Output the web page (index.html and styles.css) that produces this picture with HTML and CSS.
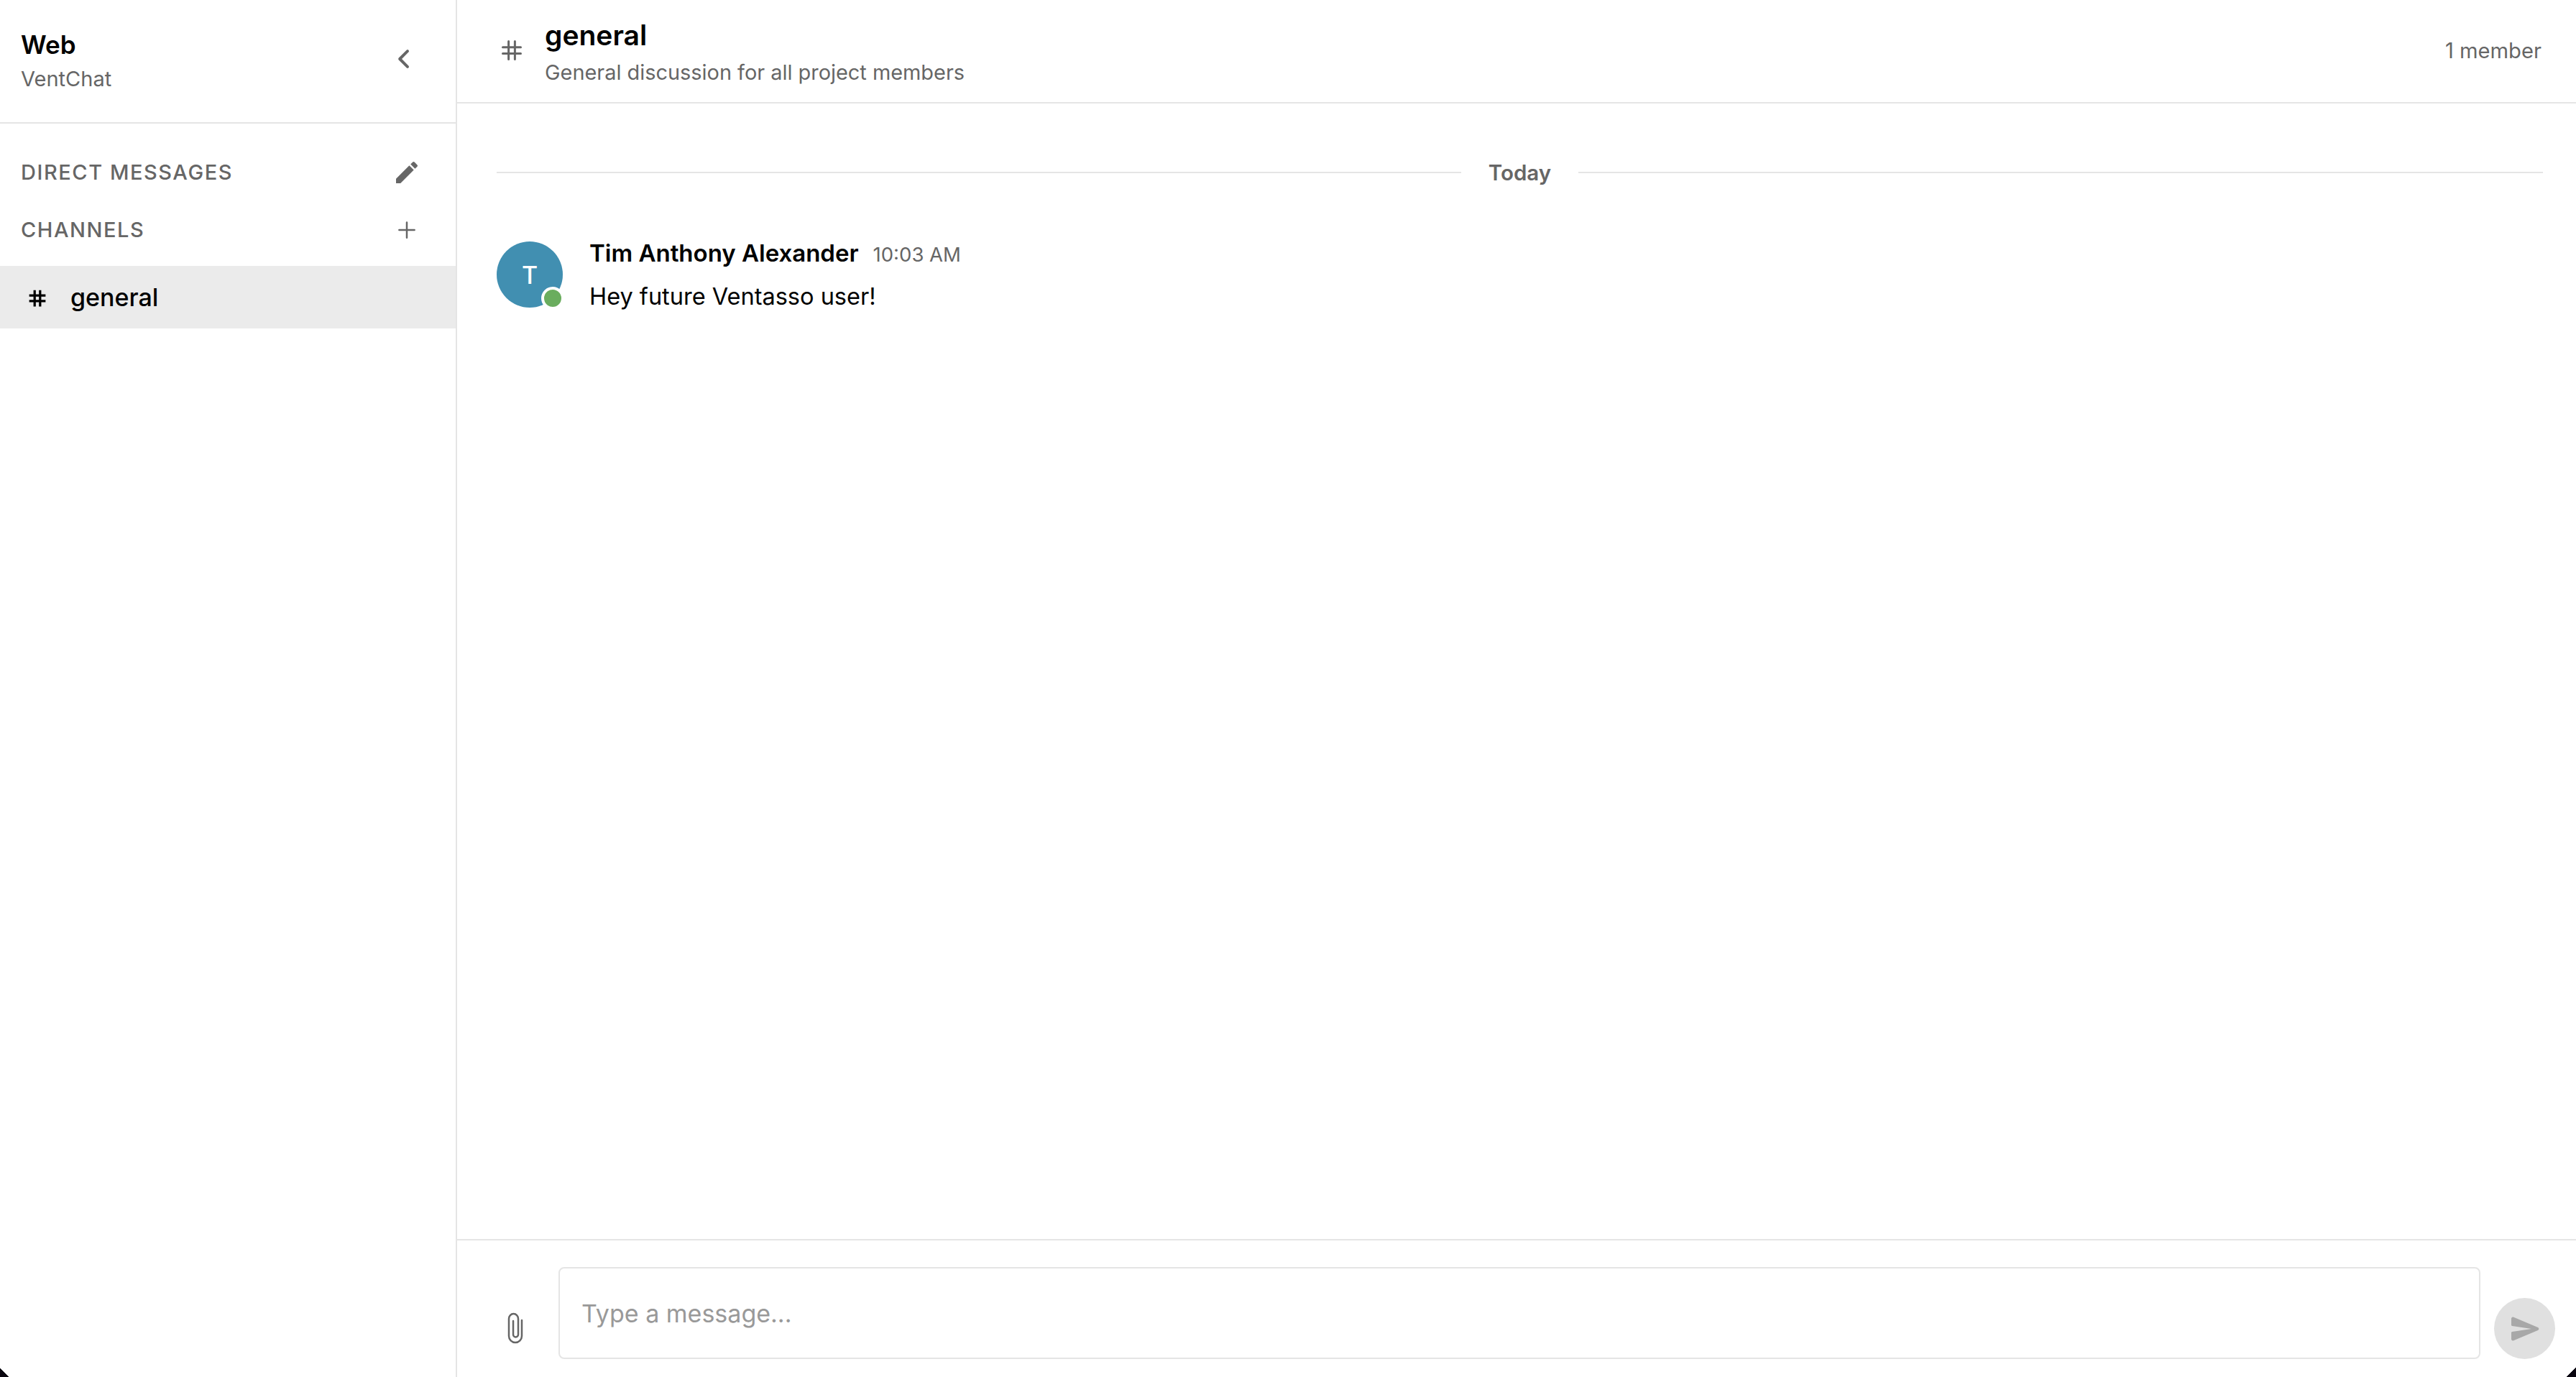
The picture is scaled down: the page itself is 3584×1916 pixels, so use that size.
FILE: index.html
```html
<!DOCTYPE html>
<html lang="en">
<head>
<meta charset="utf-8">
<title>VentChat</title>
<link rel="stylesheet" href="styles.css">
</head>
<body>
<div class="app">
  <aside class="sidebar">
    <header class="side-head">
      <div class="workspace">
        <div class="ws-name">Web</div>
        <div class="ws-sub">VentChat</div>
      </div>
      <svg class="icon collapse" viewBox="0 0 24 24"><path d="M15 5.500l-6.500 6.500 6.500 6.500" fill="none" stroke="#666" stroke-width="2.400" stroke-linecap="round" stroke-linejoin="round"/></svg>
    </header>
    <div class="section first">
      <span class="section-label">DIRECT MESSAGES</span>
      <svg class="icon pencil" viewBox="0 0 24 24"><path fill="#666" d="M3 17.250V21h3.750L17.810 9.940l-3.750-3.750L3 17.250zM20.710 7.040a1 1 0 0 0 0-1.410l-2.340-2.340a1 1 0 0 0-1.410 0l-1.830 1.830 3.750 3.750 1.830-1.830z"/></svg>
    </div>
    <div class="section">
      <span class="section-label">CHANNELS</span>
      <svg class="icon plus" viewBox="0 0 24 24"><path d="M12 3.500v17M3.500 12h17" fill="none" stroke="#666" stroke-width="2" stroke-linecap="round"/></svg>
    </div>
    <div class="channel active">
      <svg class="hash-small" viewBox="0 0 24 24"><path d="M8.500 1.500v21M15.500 1.500v21M1.500 8.500h21M1.500 15.500h21" fill="none" stroke="#000" stroke-width="3"/></svg>
      <span class="channel-name">general</span>
    </div>
  </aside>
  <main class="main">
    <header class="main-head">
      <svg class="hash" viewBox="0 0 24 24"><path d="M8.500 2v20M15.500 2v20M2 8.500h20M2 15.500h20" fill="none" stroke="#666" stroke-width="2.400" stroke-linecap="round"/></svg>
      <div class="title-block">
        <div class="title">general</div>
        <div class="desc">General discussion for all project members</div>
      </div>
      <div class="members">1 member</div>
    </header>
    <section class="messages">
      <div class="divider"><span class="rule"></span><span class="day">Today</span><span class="rule"></span></div>
      <article class="message">
        <div class="avatar">T<span class="presence"></span></div>
        <div class="body">
          <div class="meta"><span class="author">Tim Anthony Alexander</span><span class="time">10:03 AM</span></div>
          <div class="text">Hey future Ventasso user!</div>
        </div>
      </article>
    </section>
    <footer class="composer">
      <svg class="clip" viewBox="0 0 22 44"><path d="M20 11V33a9 9 0 0 1-18 0V9a6.500 7 0 0 1 13 0V31a3.500 3.500 0 0 1-7 0V12" fill="none" stroke="#666" stroke-width="2.500" stroke-linecap="round"/></svg>
      <div class="input">Type a message...</div>
      <button class="send"><svg viewBox="0 0 40 36"><path fill="#a8a8a8" d="M1 4c0-2 1.500-3 3.200-2.300L38 16c1.800.8 1.800 3.200 0 4L4.200 34.300C2.500 35 1 34 1 32v-8.500c0-.9.5-1.400 1.300-1.500L29 18 2.300 14c-.8-.1-1.300-.6-1.300-1.500z"/></svg></button>
    </footer>
  </main>
</div>
<span class="corner left"></span>
<span class="corner right"></span>
</body>
</html>
```
FILE: styles.css
```css
* { box-sizing: border-box; }
html, body { margin: 0; height: 100%; background: #fff; overflow: hidden; }
body { font-family: Inter, "Liberation Sans", sans-serif; color: #000; }
.app { display: flex; height: 1916px; width: 3584px; }
.sidebar { width: 636px; flex: none; border-right: 2px solid #e5e5e5; display: flex; flex-direction: column; }
.side-head { height: 172px; border-bottom: 2px solid #e5e5e5; display: flex; align-items: center; justify-content: space-between; padding: 0 56px 4px 29px; }
.ws-name { font-size: 35px; font-weight: 600; line-height: 48px; }
.ws-sub { font-size: 29px; color: #666; line-height: 36px; margin-top: 6px; }
.icon { display: block; }
.collapse { width: 40px; height: 40px; margin-top: -2px; margin-right: -4px; }
.section { display: flex; align-items: center; justify-content: space-between; padding: 0 48px 0 29px; height: 80px; }
.section.first { margin-top: 28px; }
.section-label { font-size: 29px; font-weight: 550; letter-spacing: 1.550px; color: #666; margin-top: -2px; }
.pencil { width: 40px; height: 40px; }
.plus { width: 30px; height: 30px; margin-right: 5px; }
.channel { display: flex; align-items: center; height: 87px; margin-top: 10px; padding-left: 39px; gap: 33px; }
.channel.active { background: #ebebeb; }
.hash-small { width: 26px; height: 26px; margin-top: 2px; }
.channel-name { font-size: 34px; font-weight: 550; }
.main { flex: 1; display: flex; flex-direction: column; min-width: 0; }
.main-head { height: 144px; flex: none; border-bottom: 2px solid #e5e5e5; display: flex; align-items: center; padding: 4px 48px 0 61px; }
.hash { width: 30px; height: 30px; margin: -6px 31px 0 0; }
.title-block { flex: 1; }
.title { font-size: 39px; font-weight: 600; line-height: 48px; }
.desc { font-size: 28.900px; color: #666; line-height: 40px; margin-top: 8px; }
.members { font-size: 29.200px; color: #666; margin-top: -6px; }
.messages { flex: 1; padding: 76px 46px 0 55px; }
.divider { display: flex; align-items: center; gap: 38px; height: 40px; }
.rule { flex: 1; height: 2px; background: #e5e5e5; }
.day { font-size: 29.500px; font-weight: 600; color: #666; }
.message { display: flex; gap: 37px; margin-top: 76px; }
.avatar { position: relative; width: 92px; height: 92px; flex: none; border-radius: 50%; background: #418fb1; color: #fff; font-size: 34px; font-weight: 500; display: flex; align-items: center; justify-content: center; }
.presence { position: absolute; right: -2px; bottom: -3px; width: 32px; height: 32px; border-radius: 50%; background: #6aad5e; border: 4px solid #fff; }
.meta { display: flex; align-items: baseline; gap: 20px; line-height: 44px; margin-top: -6px; }
.author { font-size: 33px; font-weight: 600; }
.time { font-size: 27.500px; color: #666; }
.text { font-size: 32.500px; line-height: 48px; margin-top: 13px; }
.composer { height: 192px; flex: none; border-top: 2px solid #e5e5e5; display: flex; align-items: flex-end; padding: 0 29px 25px 70px; }
.clip { width: 22px; height: 44px; margin: 0 49px 21px 0; flex: none; }
.input { flex: 1; height: 128px; border: 2px solid #e5e5e5; border-radius: 8px; padding: 0 30px; font-size: 34px; color: #999; display: flex; align-items: center; margin-right: 19px; }
.send { width: 85px; height: 85px; border: 0; border-radius: 50%; background: #e0e0e0; padding: 0; display: flex; align-items: center; justify-content: center; }
.send svg { width: 40px; height: 36px; }
.corner { position: absolute; bottom: 0; width: 13px; height: 13px; }
.corner.left { left: 0; background: linear-gradient(to top right, #0a0610 50%, transparent 50%); }
.corner.right { right: 0; background: linear-gradient(to top left, #0a0610 50%, transparent 50%); }
```
